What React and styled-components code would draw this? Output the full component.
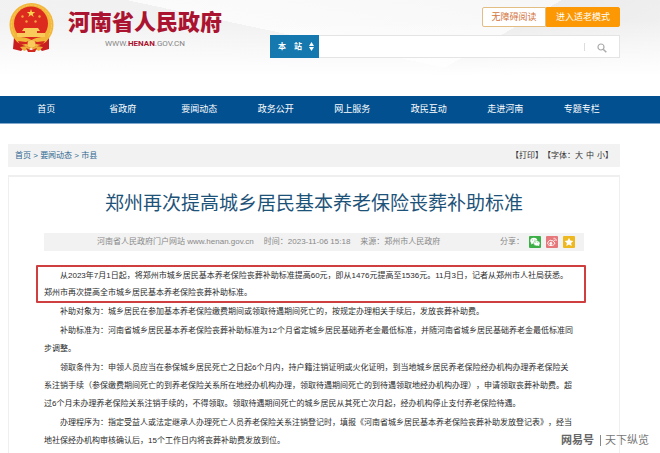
import React from "react";
import styled, { createGlobalStyle } from "styled-components";

const GlobalStyle = createGlobalStyle`
  * { box-sizing: border-box; }
  body {
    margin: 0;
    background: #fff;
    color: #333;
    font-family: "Liberation Sans", "Noto Sans CJK SC", sans-serif;
    font-size: 8px;
    line-height: 12px;
    text-spacing-trim: space-all;
  }
  a { color: inherit; text-decoration: none; }
  button, select, input { font-family: inherit; }
`;

const Page = styled.div`
  position: relative;
  display: flex;
  flex-direction: column;
  min-height: 100vh;
`;

const Header = styled.header`
  display: flex;
  justify-content: space-between;
  height: 96px;
  padding: 3px 40px 0 8px;
  background:
    linear-gradient(to bottom, transparent 20px, #fff 76px),
    linear-gradient(150deg, transparent 68%, #ebebeb 68%, #f4f4f4 100%),
    linear-gradient(192deg, #f6f6f6 0%, #fbfbfb 48%, #f1f1f1 48%, #f3f3f3 100%);
`;

const Brand = styled.a`
  display: flex;
  align-items: flex-start;
  gap: 13px;
`;

const BrandText = styled.div`
  display: flex;
  flex-direction: column;
  align-items: center;
  padding-top: 5px;
`;

const SiteName = styled.strong`
  color: #ab1430;
  font-size: 22px;
  line-height: 30px;
  font-weight: 900;
`;

const SiteUrl = styled.span`
  color: #858585;
  font-family: Roboto, sans-serif;
  font-size: 8px;
  b { color: #ab1430; }
`;

const Tools = styled.div`
  display: flex;
  flex-direction: column;
  align-items: flex-end;
  gap: 8px;
  width: 350px;
  padding-top: 4px;
`;

const ModeGroup = styled.div`
  display: flex;
`;

const ModeButton = styled.button`
  height: 20px;
  padding: 0 8px;
  border: 1px solid ${(p) => (p.$solid ? "#fc9803" : "#e2bd84")};
  border-radius: ${(p) => (p.$solid ? "0 2px 2px 0" : "2px 0 0 2px")};
  background: ${(p) => (p.$solid ? "#fc9803" : "#fff")};
  color: ${(p) => (p.$solid ? "#fff" : "#d2743c")};
  font-size: 9px;
  line-height: 16px;
  flex: 0 0 ${(p) => (p.$solid ? "74px" : "64px")};
`;

const SearchForm = styled.form`
  display: flex;
  width: 100%;
  height: 23px;
  border: 1px solid #e4e4e4;
  background: #fff;
`;

const ScopeBox = styled.label`
  display: flex;
  align-items: center;
  gap: 6px;
  width: 49px;
  margin: -1px 0 -1px -1px;
  padding: 0 5px 0 8px;
  background: #1578ae;
`;

const ScopeSelect = styled.select`
  flex: 1;
  min-width: 0;
  padding: 0;
  border: 0;
  background: transparent;
  color: #fff;
  appearance: none;
  font-size: 8px;
  font-weight: 700;
`;

const SearchInput = styled.input`
  flex: 1;
  min-width: 0;
  border: 0;
  padding: 0 8px;
  outline: 0;
  background: transparent;
  font-size: 9px;
`;

const SearchButton = styled.button`
  align-self: center;
  display: grid;
  place-items: center;
  width: 35px;
  height: 8px;
  padding: 0;
  border: 0;
  border-left: 1px solid #ddd;
  background: transparent;
`;

const Nav = styled.nav`
  display: grid;
  grid-template-columns: repeat(8, 1fr);
  height: 28px;
  padding: 0 40px 0 8px;
  border-bottom: 1px solid #7fa8cc;
  background: #02508f;
`;

const NavLink = styled.a`
  color: #fff;
  font-size: 9px;
  line-height: 27px;
  text-align: center;
`;

const Main = styled.main`
  flex: 1;
  display: flex;
  flex-direction: column;
  gap: 8px;
  padding: 20px 40px 0 8px;
`;

const CrumbBar = styled.div`
  display: flex;
  align-items: center;
  justify-content: space-between;
  height: 23px;
  padding: 0 7px;
  background: #f2f2f2;
`;

const Crumbs = styled.nav`
  color: #2f6790;
`;

const PageTools = styled.div`
  display: flex;
  color: #333;
`;

const TextButton = styled.button`
  padding: 0;
  border: 0;
  background: none;
  color: inherit;
  font-size: 8px;
  line-height: 12px;
`;

const SizeGroup = styled.span`
  display: flex;
  gap: 3px;
`;

const Card = styled.article`
  flex: 1;
  padding: 13px 35px 0;
  border: 1px solid #efefef;
  border-top-width: 2px;
  border-bottom: 0;
`;

const Title = styled.h1`
  margin: 0 0 15px;
  color: #1e5379;
  font-size: 19px;
  font-weight: 400;
  line-height: 28px;
  text-align: center;
`;

const MetaBar = styled.div`
  display: flex;
  align-items: center;
  justify-content: space-between;
  height: 18px;
  padding: 0 9px 0 53px;
  background: #f2f2f2;
  color: #888;
`;

const MetaList = styled.div`
  display: flex;
  gap: 10px;
`;

const Share = styled.div`
  display: flex;
  align-items: center;
  gap: 5px;
`;

const ShareButton = styled.button`
  display: grid;
  place-items: center;
  width: 12px;
  height: 12px;
  padding: 0;
  border: 0;
  border-radius: 1px;
  background: ${(p) => p.$color};
`;

const Body = styled.div`
  display: flex;
  flex-direction: column;
  gap: 1px;
  padding-top: 14px;
  color: #2b2b2b;
  line-height: 18px;
`;

const Paragraph = styled.p`
  margin: 0;
  text-indent: 2em;
`;

const Highlight = styled(Paragraph)`
  margin: 0 -2px -1px -8px;
  padding: 0 0 0 6px;
  border: 2px solid #cf3f3f;
  border-radius: 1px;
  line-height: 17px;
`;

const Watermark = styled.div`
  position: absolute;
  right: 11px;
  bottom: 4px;
  display: flex;
  align-items: center;
  gap: 6px;
  color: #777;
  font-size: 11px;
  line-height: 18px;
  text-shadow: 0 0 2px #fff, 0 0 2px #fff;
  b { color: #666; }
`;

const WatermarkRule = styled.i`
  width: 1px;
  height: 11px;
  margin-right: -2px;
  background: #888;
`;

const Emblem = () => (
  <svg width="47" height="50" viewBox="0 0 47 50" aria-hidden="true">
    <path d="M6 34 L5 46 L13 48 L16 45 L31 45 L34 48 L41 46 L41 34Z" fill="#c91d20" />
    <circle cx="23.500" cy="22" r="22" fill="#f2b63b" />
    <circle cx="23.500" cy="22" r="20" fill="none" stroke="#f8cb5a" strokeWidth="1" strokeDasharray="3 1" />
    <circle cx="23" cy="20.500" r="17" fill="#dd2a1f" />
    <path d="M23 6l1 3h3.200l-2.500 2 1 3-2.700-1.900-2.700 1.900 1-3-2.500-2H22z" fill="#fbd34e" />
    <g fill="#f3a140">
      <circle cx="14.500" cy="13.500" r="1.200" />
      <circle cx="18.500" cy="18.500" r="1.200" />
      <circle cx="27.500" cy="18.500" r="1.200" />
      <circle cx="31.500" cy="13.500" r="1.200" />
    </g>
    <path d="M16 25h14l2 3h-3v2h8v4H9v-4h8v-2h-3z" fill="#f8cb5a" />
    <path d="M6 33c6 2 10 0 17.500 4C31 33 35 35 41 33l-3 6-7 3H16l-7-3z" fill="#f2b63b" />
    <path d="M10 38l8 1 5-2 6 2 8-1-3 4-6-1-5 2-5-2-6 1z" fill="#d4281f" />
    <circle cx="23.500" cy="41" r="4" fill="#f8cb5a" />
    <path d="M12 44l7-1 4 3 5-3 7 1-4 4-5-2h-5l-5 2z" fill="#efb03a" />
    <path d="M18 45l5 2 6-2-2 4h-7z" fill="#d4281f" />
  </svg>
);

const SortArrows = () => (
  <svg width="5" height="9" viewBox="0 0 5 9" fill="#fff" aria-hidden="true">
    <path d="M2.500 0L5 4H0zM2.500 9L0 5h5z" />
  </svg>
);

const SearchIcon = () => (
  <svg width="10" height="10" viewBox="0 0 10 10" fill="none" stroke="#aaa" aria-hidden="true">
    <circle cx="4" cy="4" r="3" strokeWidth="1.200" />
    <path d="M6.200 6.200L9.300 9.300" strokeWidth="1.500" />
  </svg>
);

const WechatIcon = () => (
  <svg width="12" height="12" viewBox="0 0 12 12" fill="#fff" aria-hidden="true">
    <ellipse cx="4.800" cy="4.700" rx="3.500" ry="2.900" />
    <path d="M2.500 6.500L2 8.500l2-1z" />
    <ellipse cx="7.800" cy="7.300" rx="3.200" ry="2.600" stroke="#3caf46" strokeWidth=".5" />
    <path d="M8.500 9.300l1.700 1-.2-1.700z" />
    <g fill="#3caf46">
      <circle cx="3.600" cy="4" r=".45" />
      <circle cx="5.900" cy="4" r=".45" />
      <circle cx="6.800" cy="6.700" r=".4" />
      <circle cx="8.800" cy="6.700" r=".4" />
    </g>
  </svg>
);

const WeiboIcon = () => (
  <svg width="12" height="12" viewBox="0 0 12 12" fill="none" stroke="#fff" aria-hidden="true">
    <path d="M4.800 4.200C3 4.200 1.700 6 1.700 7.300c0 1.500 1.500 2.200 3.300 2.200 2.100 0 3.800-1 3.800-2.300 0-.8-.7-1.200-1.300-1.400.2-1.200-.8-1.400-2-.8.1-.4-.1-.8-.7-.8z" />
    <circle cx="4.900" cy="7.400" r="1" fill="#fff" />
    <path d="M7.500 2.300c1.800-.3 3 1 2.600 2.700M7.800 3.900c.6-.1 1 .3.800.9" strokeWidth=".8" />
  </svg>
);

const StarIcon = () => (
  <svg width="12" height="12" viewBox="0 0 12 12" fill="#fff" aria-hidden="true">
    <path d="M6 1.700l1.300 2.800 3.100.4-2.300 2.100.6 3.100L6 8.600l-2.700 1.500.6-3.100-2.300-2.100 3.100-.4z" />
  </svg>
);

const navItems = ["首页", "省政府", "要闻动态", "政务公开", "网上服务", "政民互动", "走进河南", "专题专栏"];

export default function App() {
  return (
    <Page>
      <GlobalStyle />
      <Header>
        <Brand href="#">
          <Emblem />
          <BrandText>
            <SiteName>河南省人民政府</SiteName>
            <SiteUrl>WWW.<b>HENAN</b>.GOV.CN</SiteUrl>
          </BrandText>
        </Brand>
        <Tools>
          <ModeGroup>
            <ModeButton type="button">无障碍阅读</ModeButton>
            <ModeButton type="button" $solid>进入适老模式</ModeButton>
          </ModeGroup>
          <SearchForm role="search" onSubmit={(e) => e.preventDefault()}>
            <ScopeBox>
              <ScopeSelect aria-label="搜索范围">
                <option>本　站</option>
              </ScopeSelect>
              <SortArrows />
            </ScopeBox>
            <SearchInput type="text" aria-label="搜索" />
            <SearchButton type="submit" aria-label="搜索">
              <SearchIcon />
            </SearchButton>
          </SearchForm>
        </Tools>
      </Header>

      <Nav>
        {navItems.map((item) => (
          <NavLink href="#" key={item}>{item}</NavLink>
        ))}
      </Nav>

      <Main>
        <CrumbBar>
          <Crumbs>
            <a href="#">首页</a> &gt; <a href="#">要闻动态</a> &gt; <a href="#">市县</a>
          </Crumbs>
          <PageTools>
            <TextButton type="button">【打印】</TextButton>
            <span>【字体：</span>
            <SizeGroup>
              <TextButton type="button">大</TextButton>
              <TextButton type="button">中</TextButton>
              <TextButton type="button">小</TextButton>
            </SizeGroup>
            <span>】</span>
          </PageTools>
        </CrumbBar>

        <Card>
          <Title>郑州再次提高城乡居民基本养老保险丧葬补助标准</Title>
          <MetaBar>
            <MetaList>
              <span>河南省人民政府门户网站 www.henan.gov.cn</span>
              <span>时间：2023-11-06 15:18</span>
              <span>来源：郑州市人民政府</span>
            </MetaList>
            <Share>
              <span>分享：</span>
              <ShareButton type="button" aria-label="微信" $color="#3caf46"><WechatIcon /></ShareButton>
              <ShareButton type="button" aria-label="微博" $color="#e6777a"><WeiboIcon /></ShareButton>
              <ShareButton type="button" aria-label="收藏" $color="#edb91f"><StarIcon /></ShareButton>
            </Share>
          </MetaBar>
          <Body>
            <Highlight>
              从2023年7月1日起，将郑州市城乡居民基本养老保险丧葬补助标准提高60元，即从1476元提高至1536元。11月3日，记者从郑州市人社局获悉。
              <br />
              郑州市再次提高全市城乡居民基本养老保险丧葬补助标准。
            </Highlight>
            <Paragraph>
              补助对象为：城乡居民在参加基本养老保险缴费期间或领取待遇期间死亡的，按规定办理相关手续后，发放丧葬补助费。
            </Paragraph>
            <Paragraph>
              补助标准为：河南省城乡居民基本养老保险丧葬补助标准为12个月省定城乡居民基础养老金最低标准，并随河南省城乡居民基础养老金最低标准同
              <br />
              步调整。
            </Paragraph>
            <Paragraph>
              领取条件为：申领人员应当在参保城乡居民死亡之日起6个月内，持户籍注销证明或火化证明，到当地城乡居民养老保险经办机构办理养老保险关
              <br />
              系注销手续（参保缴费期间死亡的到养老保险关系所在地经办机构办理，领取待遇期间死亡的到待遇领取地经办机构办理），申请领取丧葬补助费。超
              <br />
              过6个月未办理养老保险关系注销手续的，不得领取。领取待遇期间死亡的城乡居民从其死亡次月起，经办机构停止支付养老保险待遇。
            </Paragraph>
            <Paragraph>
              办理程序为：指定受益人或法定继承人办理死亡人员养老保险关系注销登记时，填报《河南省城乡居民基本养老保险丧葬补助发放登记表》，经当
              <br />
              地社保经办机构审核确认后，15个工作日内将丧葬补助费发放到位。
            </Paragraph>
          </Body>
        </Card>
      </Main>

      <Watermark>
        <b>网易号</b>
        <WatermarkRule />
        <span>天下纵览</span>
      </Watermark>
    </Page>
  );
}
